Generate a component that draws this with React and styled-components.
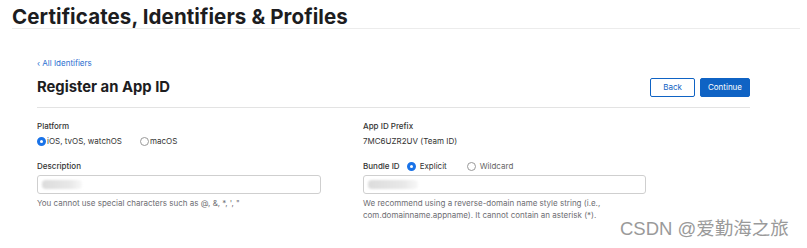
import React from "react";
import styled, { createGlobalStyle } from "styled-components";

const Global = createGlobalStyle`
  body {
    margin: 0;
    background: #fff;
    font-family: Inter, "Liberation Sans", sans-serif;
    color: #1d1d1f;
  }
`;

const Page = styled.div`
  position: relative;
  width: 807px;
  height: 248px;
  overflow: hidden;
  background: #fff;
`;

const Header = styled.h1`
  margin: 0 7px 0 12px;
  padding-top: 5px;
  height: 23px;
  font-size: 20.5px;
  line-height: 23px;
  font-weight: 700;
  letter-spacing: 0.1px;
  border-bottom: 1px solid #ececec;
`;

const Main = styled.div`
  width: 713px;
  margin: 29px 0 0 37px;
`;

const BackLink = styled.a`
  display: block;
  font-size: 8px;
  line-height: 10px;
  color: #2b6fd0;
  text-decoration: none;
`;

const TitleRow = styled.div`
  display: flex;
  align-items: center;
  justify-content: space-between;
  height: 28px;
  margin-top: 5px;
  padding-bottom: 6px;
  border-bottom: 1px solid #e3e3e3;
`;

const PageTitle = styled.h2`
  margin: 0;
  font-size: 14.8px;
  font-weight: 700;
  line-height: 18px;
`;

const Buttons = styled.div`
  display: flex;
  gap: 5px;
`;

const Button = styled.button`
  height: 19px;
  width: ${(p) => p.$w}px;
  border-radius: 2px;
  font-family: inherit;
  font-size: 8px;
  padding: 0;
  cursor: pointer;
  border: 1px solid #0f63c4;
  background: ${(p) => (p.$primary ? "#0f63c4" : "#fff")};
  color: ${(p) => (p.$primary ? "#fff" : "#0f63c4")};
`;

const Form = styled.div`
  display: grid;
  grid-template-columns: 326px 1fr;
  padding-top: 11px;
`;

const Column = styled.div`
  display: flex;
  flex-direction: column;
`;

const Label = styled.div`
  font-size: 8px;
  line-height: 14px;
  font-weight: 500;
  color: #333;
  margin-right: ${(p) => p.$mr || 0}px;
`;

const Value = styled.div`
  font-size: 8px;
  line-height: 14px;
  color: #333;
  margin-top: 1px;
`;

const RadioRow = styled.div`
  display: flex;
  align-items: center;
  gap: ${(p) => p.$gap}px;
  height: 14px;
  margin-top: ${(p) => p.$mt || 0}px;
`;

const Radio = styled.span`
  display: inline-flex;
  align-items: center;
  font-size: 8px;
  color: ${(p) => (p.$dim ? "#666" : "#333")};
  &::before {
    content: "";
    box-sizing: border-box;
    width: 9px;
    height: 9px;
    border-radius: 50%;
    margin-right: ${(p) => p.$space || 2}px;
    background: #fff;
    border: ${(p) => (p.$on ? "3px solid #1a73e8" : "1px solid #999")};
  }
`;

const Section = styled.div`
  margin-top: ${(p) => p.$mt}px;
`;

const Input = styled.div`
  box-sizing: border-box;
  height: 19px;
  width: ${(p) => p.$w}px;
  margin-top: 2px;
  border: 1px solid #cfcfcf;
  border-radius: 3px;
  display: flex;
  align-items: center;
  padding-left: 4px;
`;

const Blur = styled.span`
  display: block;
  width: ${(p) => p.$w}px;
  height: 9px;
  border-radius: 4px;
  background: linear-gradient(90deg, #dcdcdc, #e8e8e8 70%, #f8f8f8);
  filter: blur(1.2px);
`;

const Help = styled.p`
  margin: 3px 0 0;
  font-size: 8px;
  line-height: 12px;
  color: #6e6e73;
`;

const Watermark = styled.div`
  position: absolute;
  left: 620px;
  top: 218px;
  font-family: "Liberation Sans", "Noto Sans CJK SC", sans-serif;
  font-size: 18.5px;
  line-height: 22px;
  color: #9a9a9a;
  white-space: nowrap;
`;

export default function App() {
  return (
    <Page>
      <Global />
      <Header>Certificates, Identifiers &amp; Profiles</Header>
      <Main>
        <BackLink href="#">‹ All Identifiers</BackLink>
        <TitleRow>
          <PageTitle>Register an App ID</PageTitle>
          <Buttons>
            <Button $w={45}>Back</Button>
            <Button $w={50} $primary>Continue</Button>
          </Buttons>
        </TitleRow>
        <Form>
          <Column>
            <Label>Platform</Label>
            <RadioRow $gap={18} $mt={1}>
              <Radio $on $space={1}>iOS, tvOS, watchOS</Radio>
              <Radio $space={1}>macOS</Radio>
            </RadioRow>
            <Section $mt={11}>
              <Label>Description</Label>
              <Input $w={284}>
                <Blur $w={40} />
              </Input>
              <Help>You cannot use special characters such as @, &amp;, *, ', "</Help>
            </Section>
          </Column>
          <Column>
            <Label>App ID Prefix</Label>
            <Value>7MC6UZR2UV (Team ID)</Value>
            <Section $mt={11}>
              <RadioRow $gap={20}>
                <Label $mr={-13}>Bundle ID</Label>
                <Radio $on $space={4}>Explicit</Radio>
                <Radio $dim $space={4}>Wildcard</Radio>
              </RadioRow>
              <Input $w={283}>
                <Blur $w={50} />
              </Input>
              <Help>
                We recommend using a reverse-domain name style string (i.e.,
                <br />
                com.domainname.appname). It cannot contain an asterisk (*).
              </Help>
            </Section>
          </Column>
        </Form>
      </Main>
      <Watermark>CSDN @爱勤海之旅</Watermark>
    </Page>
  );
}
